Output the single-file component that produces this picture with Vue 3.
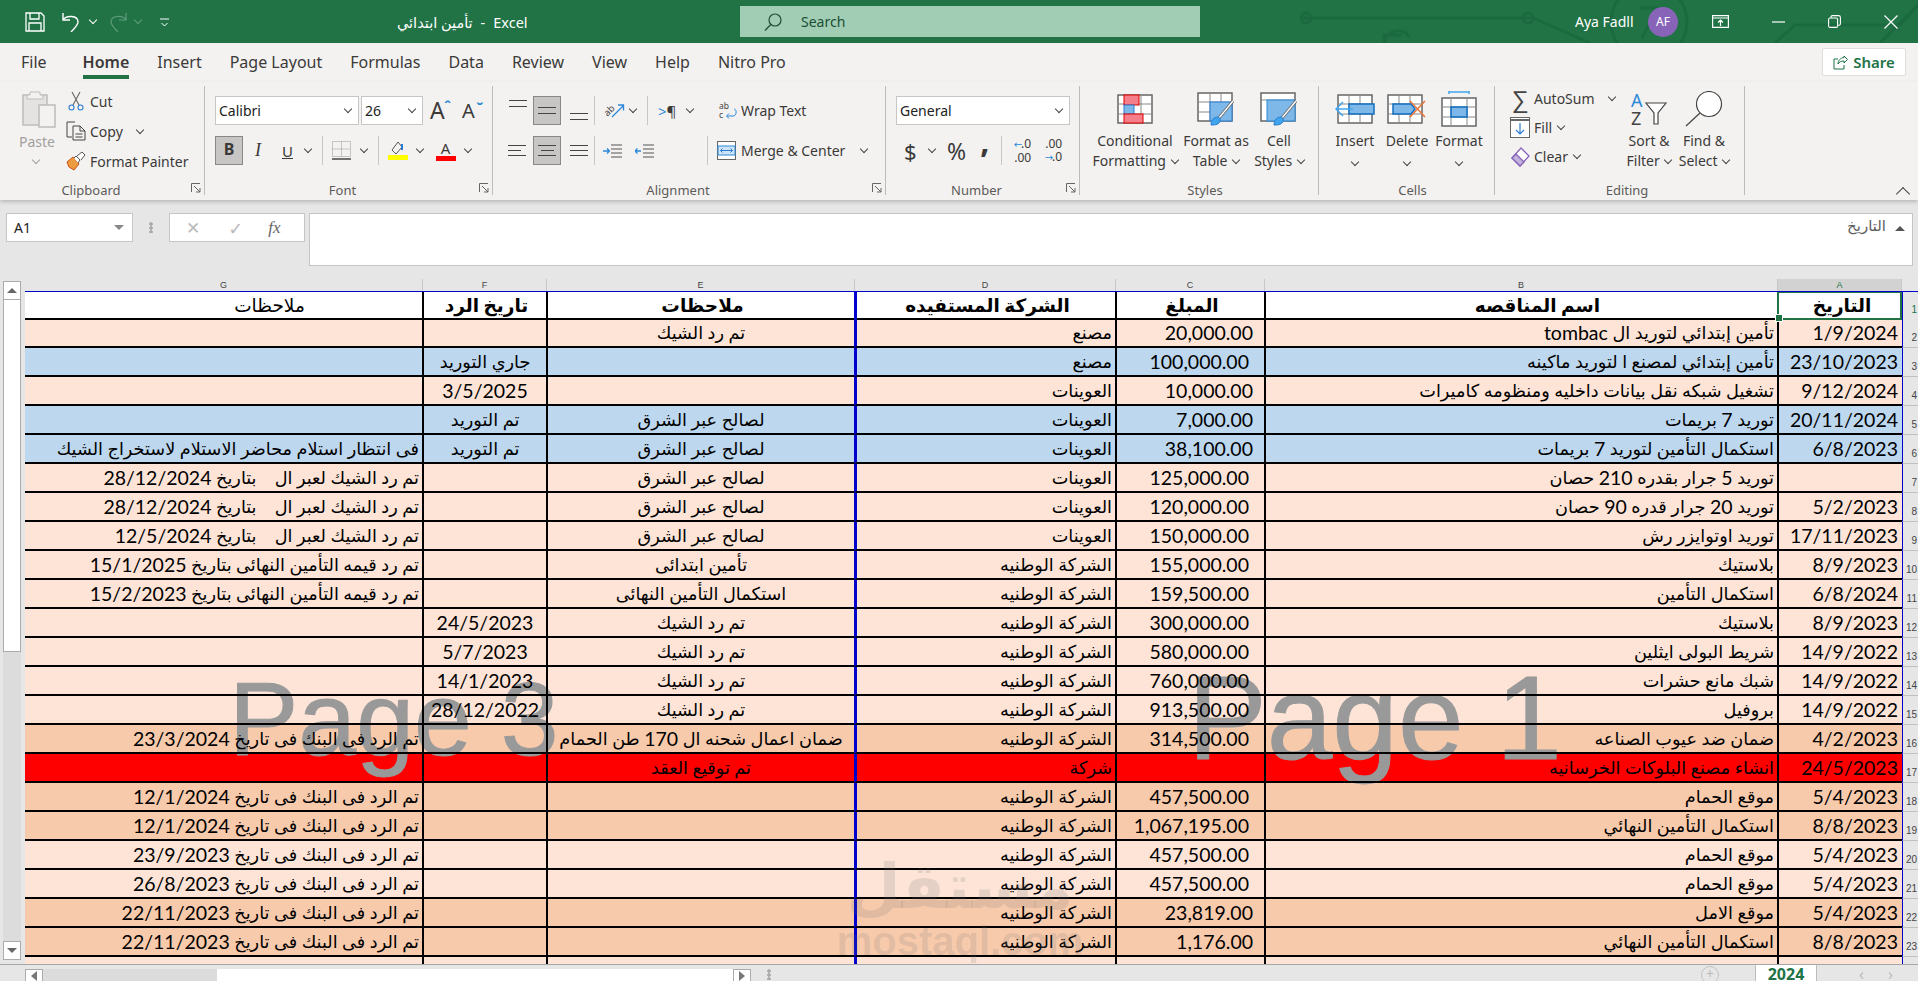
<template>
  <div class="excel">
    <!-- title bar -->
    <header class="titlebar">
      <svg class="circuit" viewBox="0 0 1918 43" width="1918" height="43" fill="none" stroke="#1b6a3f" stroke-width="3">
        <path d="M1300 18H1533L1590 43M1385 43c0-14 20-16 24-6M1384 43v-8h18" />
        <circle cx="1306" cy="18" r="5" />
        <circle cx="1528" cy="18" r="5" />
        <circle cx="1649" cy="22" r="38" />
        <path d="M1640 8h18l-16 30M1775 43l20-18h105l18-20M1880 43l38-38" />
      </svg>
      <div class="qat">
        <svg class="ic save" viewBox="0 0 20 20" width="20" height="20" fill="none" stroke="#fff" stroke-width="1.3"><path d="M1 1h15l3 3v15H1zM5 1v6h9V1M4 19v-8h12v8" /></svg>
        <svg class="ic undo" viewBox="0 0 20 20" width="20" height="20" fill="none" stroke="#fff" stroke-width="1.4"><path d="M2 1v7h7M2 8c3-5 15-5 15 2c0 3-3 6-7 10" /></svg>
        <i class="chev chev-white undo-chev"></i>
        <svg class="ic redo" viewBox="0 0 20 20" width="20" height="20" fill="none" stroke="#5f9c7b" stroke-width="1.2"><path d="M18 1v7h-7M18 8c-3-5-15-5-15 2c0 3 3 6 7 10" /></svg>
        <i class="chev chev-dim redo-chev"></i>
        <svg class="ic qat-more" viewBox="0 0 9 10" width="9" height="10" fill="none" stroke="#fff" stroke-width="1"><path d="M0 1h9M1.5 5l3 3 3-3" /></svg>
      </div>
      <div class="doc-title">
        <span dir="rtl">تأمين ابتدائي</span>
        <span class="dash">-</span>
        <span>Excel</span>
      </div>
      <div class="searchbox">
        <svg viewBox="0 0 18 18" width="18" height="18" fill="none" stroke="#1d4d35" stroke-width="1.2"><circle cx="11" cy="7" r="6" /><path d="M6.8 11.5L1 17.5" /></svg>
        <span>Search</span>
      </div>
      <div class="user">Aya Fadll</div>
      <div class="avatar">AF</div>
      <div class="winbtns">
        <svg viewBox="0 0 17 13" width="17" height="13" fill="none" stroke="#fff" stroke-width="1.2"><path d="M.6.6h15.8v11.8H.6zM.6 3h15.8M8.5 11V5M6 7.5l2.5-2.5L11 7.5" /></svg>
        <svg viewBox="0 0 13 2" width="13" height="2" class="w-min"><path d="M0 1h13" stroke="#fff" stroke-width="1.2" /></svg>
        <svg viewBox="0 0 13 13" width="13" height="13" class="w-max" fill="none" stroke="#fff" stroke-width="1.1"><rect x=".6" y="3" width="9" height="9.4" rx="1.5" /><path d="M3 3V2c0-1 .6-1.4 1.4-1.4h6C11.6.6 12.4 1.4 12.4 2.400v6.400c0 1-.6 1.400-1.400 1.400h-1.400" /></svg>
        <svg viewBox="0 0 14 14" width="14" height="14" class="w-close" fill="none" stroke="#fff" stroke-width="1.2"><path d="M.5.5l13 13M13.500.5l-13 13" /></svg>
      </div>
    </header>

    <!-- menu tabs -->
    <nav class="tabs">
      <span v-for="t in tabs" :key="t" class="tab" :class="{ active: t === 'Home', file: t === 'File' }">{{ t }}</span>
      <button class="share">
        <svg viewBox="0 0 15 15" width="15" height="15" fill="none" stroke="#217346" stroke-width="1"><path d="M11 1l3.500 3.500L11 8V6c-3 0-5 1-6 3 0-3 2-6 6-6.500zM5 4H1v10h10v-4" /></svg>
        Share
      </button>
    </nav>

    <!-- ribbon -->
    <section class="ribbon">
      <div class="group g-clip launcher">
        <div class="body">
          <div class="paste">
            <svg viewBox="0 0 34 38" width="34" height="38">
              <rect x="1" y="5" width="24" height="30" fill="#e4e3e2" stroke="#bdbcbb" stroke-width="1.5" />
              <path d="M8 5V2h10v3h3v4H5V5z" fill="#f3f2f1" stroke="#bdbcbb" />
              <rect x="17" y="15" width="16" height="22" fill="#f3f2f1" stroke="#bdbcbb" stroke-width="1.500" />
            </svg>
            <span class="pl">Paste</span>
            <i class="chev chev-dis"></i>
          </div>
          <div class="clip-rows">
            <div class="srow">
              <svg viewBox="0 0 16 20" width="16" height="20" fill="none" stroke-width="1.100"><path d="M4 1l7 13M12 1L5 14" stroke="#666" /><circle cx="3.500" cy="16.500" r="2.500" stroke="#2b7cd3" /><circle cx="12.500" cy="16.500" r="2.500" stroke="#2b7cd3" /></svg>
              <span>Cut</span>
            </div>
            <div class="srow">
              <svg viewBox="0 0 20 20" width="20" height="20" fill="none" stroke="#444" stroke-width="1"><path d="M8 1H1v15h5M8 1l1 0M7 5h7l5 5v9H7zM14 5v5h5M9.500 13h7M9.500 16h7" /></svg>
              <span>Copy</span>
              <i class="chev copy-chev"></i>
            </div>
            <div class="srow">
              <svg viewBox="0 0 20 20" width="20" height="20"><path d="M1 11l6-5 6 7-5 6-5-3z" fill="#ed9b40" stroke="#ca5010" /><path d="M8 7l2-2 4 4-2 3M11 5l5-4 3 3-4 5" fill="#fff" stroke="#555" /></svg>
              <span>Format Painter</span>
            </div>
          </div>
        </div>
        <div class="glabel">Clipboard</div>
        <svg class="launch" viewBox="0 0 10 10" width="10" height="10" fill="none" stroke="#666"><path d="M.5 9V.5H9M3 3l6 6M9 5v4H5" /></svg>
      </div>

      <div class="group g-font launcher">
        <div class="body col">
          <div class="line">
            <div class="select s-font"><span>Calibri</span><i class="chev"></i></div>
            <div class="select s-size"><span>26</span><i class="chev"></i></div>
            <span class="grow">A<sup>ˆ</sup></span>
            <span class="shrink">A<sup>ˇ</sup></span>
          </div>
          <div class="line second">
            <span class="bbtn on">B</span>
            <span class="ibtn">I</span>
            <span class="ubtn">U</span>
            <i class="chev u-chev"></i>
            <span class="vsep s1"></span>
            <svg class="bord" viewBox="0 0 19 19" width="19" height="19" fill="none"><path d="M.5.5h18v15H.5zM9.500.5v15M.5 8h18" stroke="#999" stroke-dasharray="1 1" /><path d="M0 18h19" stroke="#444" stroke-width="1.500" /></svg>
            <i class="chev b-chev"></i>
            <span class="vsep s2"></span>
            <div class="colorbtn c1">
              <svg viewBox="0 0 19 14" width="19" height="14" fill="none"><path d="M4 9l6-8 4 5-6 7z" stroke="#555" /><path d="M14 3v6" stroke="#2b7cd3" stroke-width="2" /></svg>
              <span class="swatch yellow"></span>
            </div>
            <i class="chev c-chev"></i>
            <div class="colorbtn c2">
              <span class="atext">A</span>
              <span class="swatch redswatch"></span>
            </div>
            <i class="chev d-chev"></i>
          </div>
        </div>
        <div class="glabel">Font</div>
        <svg class="launch" viewBox="0 0 10 10" width="10" height="10" fill="none" stroke="#666"><path d="M.5 9V.5H9M3 3l6 6M9 5v4H5" /></svg>
      </div>

      <div class="group g-align launcher">
        <div class="body">
          <div class="align-grid">
            <div class="aline">
              <span class="al tops"><b></b><b></b></span>
              <span class="al mid on"><b></b><b></b></span>
              <span class="al bots"><b></b><b></b></span>
              <span class="vsep a1"></span>
              <svg class="orient" viewBox="0 0 22 20" width="22" height="20" fill="none"><path d="M9 16L20 5M15 4h5.500v5.500" stroke="#2b88d8" stroke-width="1.300" /><text x="1" y="13" font-size="9.500" fill="#444" transform="rotate(-45 6 10)" font-family="Noto Sans">ab</text></svg>
              <i class="chev o-chev"></i>
              <span class="vsep a2"></span>
              <span class="rtl-mark"><em>&gt;</em>¶</span>
              <i class="chev r-chev"></i>
            </div>
            <div class="aline second">
              <span class="al l"><b></b><b></b><b></b></span>
              <span class="al c on"><b></b><b></b><b></b></span>
              <span class="al r"><b></b><b></b><b></b></span>
              <span class="vsep a1"></span>
              <svg class="indent" viewBox="0 0 19 14" width="19" height="14" fill="none" stroke="#555"><path d="M8 1h11M8 5h11M8 9h11M8 13h11" /><path d="M0 7h6M4 4.500L6.500 7 4 9.500" stroke="#2b88d8" stroke-width="1.300" /></svg>
              <svg class="outdent" viewBox="0 0 19 14" width="19" height="14" fill="none" stroke="#555"><path d="M8 1h11M8 5h11M8 9h11M8 13h11" /><path d="M6 7H0M2.500 4.500L0 7l2.500 2.500" stroke="#2b88d8" stroke-width="1.300" /></svg>
              <span class="vsep a3"></span>
            </div>
          </div>
          <div class="wrapcol">
            <div class="srow wrap">
              <svg viewBox="0 0 18 18" width="18" height="18" fill="none"><text x="0" y="7" font-size="8.500" fill="#444" font-family="Noto Sans">ab</text><text x="0" y="16" font-size="8.500" fill="#444" font-family="Noto Sans">c</text><path d="M15 7c3 0 3 7-1 7H8M10 11.500L7.500 14l2.500 2.500" stroke="#2b88d8" /></svg>
              <span>Wrap Text</span>
            </div>
            <div class="srow merge">
              <svg viewBox="0 0 19 19" width="19" height="19" fill="none"><rect x=".5" y=".5" width="18" height="18" fill="#fff" stroke="#666" /><rect x="1" y="5" width="17" height="9" fill="#cfe4f6" stroke="#2b88d8" /><path d="M3.500 9.500h12M5.500 7.500l-2 2 2 2M13.500 7.500l2 2-2 2" stroke="#2b7cd3" /></svg>
              <span>Merge &amp; Center</span>
              <i class="chev m-chev"></i>
            </div>
          </div>
        </div>
        <div class="glabel">Alignment</div>
        <svg class="launch" viewBox="0 0 10 10" width="10" height="10" fill="none" stroke="#666"><path d="M.5 9V.5H9M3 3l6 6M9 5v4H5" /></svg>
      </div>

      <div class="group g-num launcher">
        <div class="body col">
          <div class="select s-num"><span>General</span><i class="chev"></i></div>
          <div class="line second numline">
            <span class="dollar">$</span>
            <i class="chev n1"></i>
            <span class="pct">%</span>
            <span class="comma">,</span>
            <span class="vsep n2"></span>
            <span class="dec inc"><em>←</em>.0<br />.00</span>
            <span class="dec out">.00<br /><em>→</em>.0</span>
          </div>
        </div>
        <div class="glabel">Number</div>
        <svg class="launch" viewBox="0 0 10 10" width="10" height="10" fill="none" stroke="#666"><path d="M.5 9V.5H9M3 3l6 6M9 5v4H5" /></svg>
      </div>

      <div class="group g-styles">
        <div class="body">
          <div class="big w86">
            <div class="bigicon">
              <svg viewBox="0 0 36 30" width="36" height="30">
                <rect x="1" y="1" width="34" height="28" fill="#fff" stroke="#666" stroke-width="1.500" />
                <path d="M13 1v28M24 1v28M1 10h34M1 20h34" stroke="#888" />
                <rect x="7" y="1" width="15" height="10" fill="#f47e89" stroke="#d00" />
                <rect x="7" y="11" width="10" height="9" fill="#7db8e8" stroke="#2b7cd3" />
                <rect x="7" y="20" width="19" height="9" fill="#f47e89" stroke="#d00" />
              </svg>
            </div>
            <span>Conditional</span>
            <span>Formatting <i class="chev inl"></i></span>
          </div>
          <div class="big w76">
            <div class="bigicon">
              <svg viewBox="0 0 38 34" width="38" height="34">
                <rect x="1" y="1" width="34" height="28" fill="#fff" stroke="#666" stroke-width="1.500" />
                <path d="M13 1v28M24 1v28M1 10h34M1 20h34" stroke="#888" />
                <rect x="13" y="10" width="22" height="19" fill="#7db8e8" stroke="#2b7cd3" />
                <path d="M36 9L22 26" stroke="#666" stroke-width="3" />
                <path d="M36 9L22 26" stroke="#fff" stroke-width="1.400" />
                <path d="M14 33c0-5 3-8 7-8 3 1 3 4 1 6-2 2-5 2-8 2z" fill="#41a5ee" stroke="#2b7cd3" />
              </svg>
            </div>
            <span>Format as</span>
            <span>Table <i class="chev inl"></i></span>
          </div>
          <div class="big w50">
            <div class="bigicon">
              <svg viewBox="0 0 38 34" width="38" height="34">
                <rect x="1" y="1" width="34" height="28" fill="#fff" stroke="#666" stroke-width="1.500" />
                <path d="M1 8h34" stroke="#888" />
                <rect x="7" y="8" width="28" height="21" fill="#7db8e8" stroke="#2b88d8" />
                <path d="M36 9L22 26" stroke="#666" stroke-width="3" />
                <path d="M36 9L22 26" stroke="#fff" stroke-width="1.400" />
                <path d="M14 33c0-5 3-8 7-8 3 1 3 4 1 6-2 2-5 2-8 2z" fill="#41a5ee" stroke="#2b7cd3" />
              </svg>
            </div>
            <span>Cell</span>
            <span>Styles <i class="chev inl"></i></span>
          </div>
        </div>
        <div class="glabel">Styles</div>
      </div>

      <div class="group g-cells">
        <div class="body">
          <div class="big w48">
            <div class="bigicon">
              <svg viewBox="0 0 40 30" width="40" height="30">
                <rect x="3" y="1" width="34" height="28" fill="#fff" stroke="#666" stroke-width="1.500" />
                <path d="M14 1v28M25 1v28M3 10h34M3 20h34" stroke="#888" />
                <rect x="14" y="10" width="25" height="10" fill="#7db8e8" stroke="#106ebe" stroke-width="1.500" />
                <path d="M18 15H2M8 8l-7 7 7 7" fill="none" stroke="#41a5ee" stroke-width="1.500" />
              </svg>
            </div>
            <span>Insert</span>
            <i class="chev under"></i>
          </div>
          <div class="big w56">
            <div class="bigicon">
              <svg viewBox="0 0 40 30" width="40" height="30">
                <rect x="1" y="1" width="34" height="28" fill="#fff" stroke="#666" stroke-width="1.500" />
                <path d="M12 1v28M23 1v28M1 10h34M1 20h34" stroke="#888" />
                <path d="M6 10h18l4 5-4 5H6z" fill="#7db8e8" stroke="#106ebe" stroke-width="1.500" />
                <path d="M23 7l15 16M38 7L23 23" stroke="#e8743b" stroke-width="1.500" />
              </svg>
            </div>
            <span>Delete</span>
            <i class="chev under"></i>
          </div>
          <div class="big w48">
            <div class="bigicon">
              <svg viewBox="0 0 36 36" width="36" height="36">
                <path d="M8 1h20M8 0v3M28 0v3" stroke="#41a5ee" stroke-width="1.500" />
                <rect x="1" y="7" width="34" height="28" fill="#fff" stroke="#666" stroke-width="1.500" />
                <path d="M10 7v28M26 7v28M1 16h34M1 26h34" stroke="#888" />
                <rect x="10" y="16" width="16" height="10" fill="#7db8e8" stroke="#106ebe" stroke-width="1.500" />
              </svg>
            </div>
            <span>Format</span>
            <i class="chev under"></i>
          </div>
        </div>
        <div class="glabel">Cells</div>
      </div>

      <div class="group g-edit">
        <div class="body">
          <div class="edit-rows">
            <div class="srow">
              <span class="sigma">∑</span>
              <span>AutoSum</span>
              <i class="chev e1"></i>
            </div>
            <div class="srow">
              <svg viewBox="0 0 20 22" width="20" height="22" fill="none"><rect x=".5" y=".5" width="19" height="20" fill="#fff" stroke="#666" /><path d="M.5 3h19" stroke="#666" stroke-width="2" /><path d="M10 6v11M6 13l4 4 4-4" stroke="#2b7cd3" stroke-width="1.200" /></svg>
              <span>Fill</span>
              <i class="chev e2"></i>
            </div>
            <div class="srow">
              <svg viewBox="0 0 20 20" width="20" height="20"><path d="M11 1l8 8-9 10-8-8z" fill="#fff" stroke="#8764b8" stroke-width="1.300" /><path d="M6 7l8 8-4 4-8-8z" fill="#c3b2dd" stroke="#8764b8" stroke-width="1.300" /></svg>
              <span>Clear</span>
              <i class="chev e2"></i>
            </div>
          </div>
          <div class="big w54">
            <div class="bigicon sort">
              <svg viewBox="0 0 36 34" width="36" height="34" fill="none">
                <text x="0" y="15" font-size="18" fill="#2b88d8" font-family="Noto Sans">A</text>
                <text x="0" y="33" font-size="18" fill="#444" font-family="Noto Sans">Z</text>
                <path d="M15 11h20l-8 10v11h-4V21z" fill="#fff" stroke="#444" stroke-width="1.200" />
              </svg>
            </div>
            <span>Sort &amp;</span>
            <span>Filter <i class="chev inl"></i></span>
          </div>
          <div class="big w56">
            <div class="bigicon sort">
              <svg viewBox="0 0 38 36" width="38" height="36" fill="none" stroke="#444" stroke-width="1.200">
                <circle cx="24" cy="13" r="12.500" fill="#fff" />
                <path d="M15 22L1 35" />
              </svg>
            </div>
            <span>Find &amp;</span>
            <span>Select <i class="chev inl"></i></span>
          </div>
        </div>
        <div class="glabel">Editing</div>
      </div>
      <div class="ribbon-end"><i class="chev chev-up"></i></div>
    </section>

    <!-- formula bar -->
    <section class="formula">
      <div class="namebox"><span>A1</span><i class="tri"></i></div>
      <div class="dots"></div>
      <div class="fxbtns">
        <span class="fx-x">✕</span>
        <span class="fx-ok">✓</span>
        <span class="fx-f">fx</span>
      </div>
      <div class="finput">
        <i class="tri up-tri"></i>
        <span dir="rtl">التاريخ</span>
      </div>
    </section>

    <!-- sheet -->
    <section class="sheetwrap">
      <div class="vscroll">
        <div class="sbtn"><i class="tri up-tri dark"></i></div>
        <div class="vthumb"></div>
        <div class="vtrack"></div>
        <div class="sbtn"><i class="tri dark"></i></div>
      </div>
      <div class="sheet">
        <div class="colheads">
          <span v-for="c in columns" :key="c.key" class="chead" :class="{ sel: c.key === 'a' }">{{ c.key.toUpperCase() }}</span>
          <span class="corner"></span>
        </div>
        <div class="grid">
          <div class="wm wm3">Page 3</div>
          <div class="wm wm1">Page 1</div>
          <div class="mark">
            <span class="mark-ar" dir="rtl">مستقل</span>
            <span class="mark-en">mostaql.com</span>
          </div>
          <div v-for="(row, i) in rows" :key="i" class="row" :class="['tone-' + row.tone, { head: i === 0 }]">
            <div
              v-for="c in columns"
              :key="c.key"
              class="cell"
              :class="['c-' + c.key, { wide: c.key === 'c' && (row.c || '').length > 9 }]"
              dir="rtl"
            >
              <span v-for="(r, j) in runs(row[c.key])" :key="j" :class="{ latin: r.latin }">{{ r.t }}</span>
            </div>
            <div class="rownum" :class="{ cur: i === 0 }">{{ i + 1 }}</div>
          </div>
          <div class="selbox"><i class="handle"></i></div>
        </div>
      </div>
    </section>

    <!-- bottom bar -->
    <footer class="bottom">
      <div class="hscroll">
        <span class="hbtn"><i class="tri left"></i></span>
        <span class="htrack"></span>
        <span class="hthumb"></span>
        <span class="hbtn"><i class="tri right"></i></span>
      </div>
      <div class="dots small"></div>
      <div class="spacer"></div>
      <span class="addsheet">+</span>
      <span class="sheettab">2024</span>
      <span class="navarrow">‹</span>
      <span class="navarrow">›</span>
    </footer>
  </div>
</template>

<script setup>
const tabs = ['File', 'Home', 'Insert', 'Page Layout', 'Formulas', 'Data', 'Review', 'View', 'Help', 'Nitro Pro']

// same order as the sheet, right to left
const columns = [
  { key: 'g' }, { key: 'f' }, { key: 'e' }, { key: 'd' }, { key: 'c' }, { key: 'b' }, { key: 'a' }
]

const NAT = 'الشركة الوطنيه'
const AWN = 'العوينات'
const EBR = 'لصالح عبر الشرق'
const RET = 'تم رد الشيك'
const BANK = 'تم الرد فى البنك فى تاريخ '
const BACK = 'تم رد الشيك لعبر ال    بتاريخ '

const rows = [
  { tone: 'white', a: 'التاريخ', b: 'اسم المناقصه', c: 'المبلغ', d: 'الشركة المستفيده', e: 'ملاحظات', f: 'تاريخ الرد', g: 'ملاحظات' },
  { tone: 'peach', a: '1/9/2024', b: 'تأمين إبتدائي لتوريد ال tombac', c: '20,000.00', d: 'مصنع', e: RET },
  { tone: 'blue', a: '23/10/2023', b: 'تأمين إبتدائي لمصنع ا لتوريد ماكينه', c: '100,000.00', d: 'مصنع', f: 'جاري التوريد' },
  { tone: 'peach', a: '9/12/2024', b: 'تشغيل شبكه نقل بيانات داخليه ومنظومه كاميرات', c: '10,000.00', d: AWN, f: '3/5/2025' },
  { tone: 'blue', a: '20/11/2024', b: 'توريد 7 بريمات', c: '7,000.00', d: AWN, e: EBR, f: 'تم التوريد' },
  { tone: 'blue', a: '6/8/2023', b: 'استكمال التأمين لتوريد 7 بريمات', c: '38,100.00', d: AWN, e: EBR, f: 'تم التوريد', g: 'فى انتظار استلام محاضر الاستلام لاستخراج الشيك' },
  { tone: 'peach', b: 'توريد 5 جرار بقدره 210 حصان', c: '125,000.00', d: AWN, e: EBR, g: BACK + '28/12/2024' },
  { tone: 'peach', a: '5/2/2023', b: 'توريد 20 جرار قدره 90 حصان', c: '120,000.00', d: AWN, e: EBR, g: BACK + '28/12/2024' },
  { tone: 'peach', a: '17/11/2023', b: 'توريد اوتوايزر رش', c: '150,000.00', d: AWN, e: EBR, g: BACK + '12/5/2024' },
  { tone: 'peach', a: '8/9/2023', b: 'بلاستيك', c: '155,000.00', d: NAT, e: 'تأمين ابتدائى', g: 'تم رد قيمه التأمين النهائى بتاريخ 15/1/2025' },
  { tone: 'peach', a: '6/8/2024', b: 'استكمال التأمين', c: '159,500.00', d: NAT, e: 'استكمال التأمين النهائى', g: 'تم رد قيمه التأمين النهائى بتاريخ 15/2/2023' },
  { tone: 'peach', a: '8/9/2023', b: 'بلاستيك', c: '300,000.00', d: NAT, e: RET, f: '24/5/2023' },
  { tone: 'peach', a: '14/9/2022', b: 'شريط البولى ايثلين', c: '580,000.00', d: NAT, e: RET, f: '5/7/2023' },
  { tone: 'peach', a: '14/9/2022', b: 'شبك مانع حشرات', c: '760,000.00', d: NAT, e: RET, f: '14/1/2023' },
  { tone: 'peach', a: '14/9/2022', b: 'بروفيل', c: '913,500.00', d: NAT, e: RET, f: '28/12/2022' },
  { tone: 'tan', a: '4/2/2023', b: 'ضمان ضد عيوب الصناعه', c: '314,500.00', d: NAT, e: 'ضمان اعمال شحنه ال 170 طن الحمام', g: BANK + '23/3/2024' },
  { tone: 'red', a: '24/5/2023', b: 'انشاء مصنع البلوكات الخرسانيه', d: 'شركة', e: 'تم توقيع العقد' },
  { tone: 'tan', a: '5/4/2023', b: 'موقع الحمام  ', c: '457,500.00', d: NAT, g: BANK + '12/1/2024' },
  { tone: 'tan', a: '8/8/2023', b: 'استكمال التأمين النهائي', c: '1,067,195.00', d: NAT, g: BANK + '12/1/2024' },
  { tone: 'peach', a: '5/4/2023', b: 'موقع الحمام  ', c: '457,500.00', d: NAT, g: BANK + '23/9/2023' },
  { tone: 'peach', a: '5/4/2023', b: 'موقع الحمام  ', c: '457,500.00', d: NAT, g: BANK + '26/8/2023' },
  { tone: 'tan', a: '5/4/2023', b: 'موقع الامل', c: '23,819.00', d: NAT, g: BANK + '22/11/2023' },
  { tone: 'tan', a: '8/8/2023', b: 'استكمال التأمين النهائي', c: '1,176.00', d: NAT, g: BANK + '22/11/2023' },
  { tone: 'peach' }
]

// digits and latin words get a bigger size than the arabic fallback font
const runs = (text) => {
  if (!text) return []
  return text.split(/([0-9A-Za-z/,.]+)/).filter(Boolean).map((t) => ({
    t,
    latin: /^[0-9A-Za-z/,.]+$/.test(t)
  }))
}
</script>

<style scoped>
.excel {
  width: 1918px;
  height: 981px;
  display: flex;
  flex-direction: column;
  overflow: hidden;
  background: #e6e6e6;
  font-family: "Noto Sans", "DejaVu Sans", sans-serif;
  font-size: 14px;
  color: #3b3a39;
}

/* chevrons and little triangles */
.chev {
  display: inline-block;
  width: 5px;
  height: 5px;
  border-right: 1px solid #444;
  border-bottom: 1px solid #444;
  transform: rotate(45deg);
  flex: none;
}
.chev-white { border-color: #fff; }
.chev-dim { border-color: #5f9c7b; }
.chev-dis { border-color: #a19f9d; }
.chev-up { transform: rotate(225deg); width: 9px; height: 9px; }
.chev.inl { margin: 0 0 3px 2px; }
.chev.under { margin-top: 8px; }
.tri {
  display: inline-block;
  width: 0;
  height: 0;
  border-left: 5px solid transparent;
  border-right: 5px solid transparent;
  border-top: 5px solid #888;
}
.tri.up-tri { border-top: 0; border-bottom: 5px solid #555; }
.tri.dark { border-top-color: #666; }
.tri.up-tri.dark { border-bottom-color: #666; }
.tri.left { border: 5px solid transparent; border-right: 6px solid #777; border-left: 0; }
.tri.right { border: 5px solid transparent; border-left: 6px solid #777; border-right: 0; }

/* title bar */
.titlebar {
  position: relative;
  flex: none;
  height: 43px;
  background: #217346;
  color: #fff;
  display: flex;
  align-items: center;
  overflow: hidden;
}
.circuit { position: absolute; left: 0; top: 0; }
.qat { position: relative; display: flex; align-items: center; width: 397px; flex: none; padding-left: 25px; box-sizing: border-box; }
.undo { margin-left: 16px; }
.undo-chev { margin: -3px 0 0 9px; }
.redo { margin-left: 12px; }
.redo-chev { margin: -3px 0 0 7px; }
.qat-more { margin-left: 19px; margin-top: 2px; }
.doc-title { position: relative; width: 343px; flex: none; display: flex; gap: 8px; font-size: 14.500px; }
.searchbox {
  position: relative;
  width: 460px;
  height: 31px;
  flex: none;
  background: #a0cdb3;
  color: #1d4d35;
  display: flex;
  align-items: center;
  padding-left: 24px;
  box-sizing: border-box;
  gap: 19px;
}
.user { position: relative; margin-left: 375px; width: 73px; flex: none; font-size: 14px; }
.avatar {
  position: relative;
  width: 30px;
  height: 30px;
  border-radius: 50%;
  background: #8764b8;
  font-size: 12px;
  display: flex;
  align-items: center;
  justify-content: center;
  flex: none;
}
.winbtns { position: relative; display: flex; align-items: center; margin-left: 34px; }
.w-min { margin-left: 43px; }
.w-max { margin-left: 43px; }
.w-close { margin-left: 43px; }

/* menu tabs */
.tabs {
  flex: none;
  height: 39px;
  background: #f3f2f1;
  display: flex;
  align-items: flex-start;
  gap: 28px;
  padding-left: 21px;
  position: relative;
}
.tab {
  height: 32px;
  line-height: 38px;
  font-size: 16px;
  box-sizing: content-box;
  white-space: nowrap;
}
.tab.file { margin-right: 8px; }
.tab.active { font-weight: 600; color: #3b3a39; border-bottom: 4px solid #217346; }
.share {
  margin-left: auto;
  margin-right: 12px;
  margin-top: 5px;
  width: 84px;
  height: 28px;
  background: #fff;
  border: 1px solid #e1dfdd;
  border-radius: 2px;
  color: #217346;
  font-family: inherit;
  font-size: 15px;
  font-weight: 600;
  display: flex;
  align-items: center;
  justify-content: center;
  gap: 5px;
  padding: 0;
}

/* ribbon */
.ribbon {
  flex: none;
  height: 118px;
  background: #f3f2f1;
  display: flex;
  padding-top: 4px;
  box-sizing: border-box;
  box-shadow: 0 2px 4px rgba(0, 0, 0, .2);
  position: relative;
  z-index: 2;
}
.group {
  position: relative;
  height: 109px;
  display: flex;
  flex-direction: column;
  border-right: 1px solid #bdbcbb;
  box-sizing: border-box;
  flex: none;
}
.body { flex: 1; display: flex; min-height: 0; }
.body.col { flex-direction: column; }
.glabel { height: 19px; line-height: 29px; text-align: center; font-size: 13px; color: #5d5b59; white-space: nowrap; }
.launcher .glabel { padding-right: 22px; }
.launch { position: absolute; right: 3px; bottom: 2px; }
.srow { display: flex; align-items: center; height: 30px; white-space: nowrap; }
.vsep { display: inline-block; width: 1px; background: #c8c6c4; flex: none; }
.on { background: #c8c6c4; outline: 1px solid #8a8886; outline-offset: -1px; }

.g-clip { width: 205px; }
.paste {
  margin-left: 19px;
  width: 47px;
  padding-top: 4px;
  box-sizing: border-box;
  display: flex;
  flex-direction: column;
  align-items: flex-start;
  color: #a19f9d;
  flex: none;
}
.paste svg { margin-left: 3px; }
.pl { margin-top: 4px; font-size: 14px; }
.paste .chev { margin-top: 6px; margin-left: 14px; }
.clip-rows .srow svg { width: 20px; margin-right: 4px; flex: none; }
.copy-chev { margin-left: 14px; margin-top: -3px; }

.g-font { width: 288px; padding: 10px 0 0 10px; }
.line { display: flex; align-items: center; height: 29px; }
.line.second { margin-top: 11px; }
.select {
  height: 29px;
  box-sizing: border-box;
  background: #fff;
  border: 1px solid #c8c6c4;
  display: flex;
  align-items: center;
  justify-content: space-between;
  padding: 0 7px 0 3px;
  flex: none;
  color: #222;
}
.select .chev { margin-top: -3px; }
.s-font { width: 144px; }
.s-size { width: 62px; margin-left: 2px; }
.grow, .shrink { font-size: 21px; line-height: 1; flex: none; position: relative; }
.grow { margin-left: 7px; width: 32px; font-size: 23px; }
.shrink { font-size: 20px; }
.grow sup, .shrink sup { color: #2b88d8; font-size: 15px; position: absolute; top: 0; left: 14px; font-weight: 700; }
.bbtn { width: 28px; height: 29px; font-weight: 700; font-size: 16px; text-align: center; line-height: 27px; flex: none; }
.ibtn { margin-left: 12px; width: 8px; font-family: "Liberation Serif", serif; font-style: italic; font-size: 18px; flex: none; }
.ubtn { margin-left: 19px; text-decoration: underline; font-size: 15px; width: 12px; flex: none; }
.u-chev { margin: -3px 0 0 11px; }
.second .vsep { height: 29px; }
.s1 { margin-left: 11px; }
.bord { margin-left: 9px; flex: none; }
.b-chev { margin: -3px 0 0 10px; }
.s2 { margin-left: 11px; }
.colorbtn { width: 19px; flex: none; display: flex; flex-direction: column; align-items: center; }
.c1 { margin-left: 9px; }
.c2 { margin-left: 13px; }
.c-chev { margin: -3px 0 0 10px; }
.d-chev { margin: -3px 0 0 10px; }
.swatch { width: 20px; height: 5px; display: block; flex: none; }
.yellow { background: #ffff00; }
.redswatch { background: #ff0000; }
.atext { font-size: 15px; line-height: 16px; height: 16px; }

.g-align { width: 393px; padding-top: 10px; display: flex; }
.align-grid { margin-left: 15px; width: 199px; flex: none; }
.aline { display: flex; align-items: center; height: 29px; position: relative; }
.aline.second { margin-top: 11px; }
.aline .vsep { height: 29px; }
.al {
  width: 19px;
  height: 29px;
  margin-right: 6px;
  display: flex;
  flex-direction: column;
  gap: 5px;
  box-sizing: border-box;
  flex: none;
  align-items: center;
}
.al b { display: block; height: 1px; width: 18px; background: #444; }
.al.on { width: 28px; margin-right: 8px; margin-left: 0; }
.al.tops { justify-content: flex-start; padding-top: 4px; }
.al.mid { justify-content: center; }
.al.bots { justify-content: flex-end; padding-bottom: 5px; }
.al.l, .al.c, .al.r { justify-content: center; gap: 4px; }
.al.l { align-items: flex-start; }
.al.r { align-items: flex-end; }
.al.l b:nth-child(2) { width: 13px; }
.al.c b:nth-child(2) { width: 13px; }
.orient { margin-left: 8px; flex: none; }
.o-chev { margin: -3px 0 0 5px; }
.a2 { margin-left: 11px; }
.rtl-mark { margin-left: 10px; font-size: 15px; width: 16px; flex: none; }
.rtl-mark em { color: #2b88d8; font-style: normal; }
.r-chev { margin: -3px 0 0 13px; }
.indent { margin-left: 8px; flex: none; }
.outdent { margin-left: 13px; flex: none; }
.a3 { margin-left: 53px; }
.wrapcol .srow { height: 29px; }
.wrapcol .srow svg { flex: none; }
.wrap svg { margin-left: 12px; margin-right: 4px; }
.merge { margin-top: 11px; }
.merge svg { margin-left: 10px; margin-right: 5px; }
.m-chev { margin: -3px 0 0 16px; }

.g-num { width: 194px; padding: 10px 0 0 10px; }
.s-num { width: 174px; }
.numline { margin-top: 11px; }
.dollar { font-size: 22px; margin-left: 8px; width: 12px; }
.n1 { margin: -3px 0 0 13px; }
.pct { margin-left: 12px; font-size: 23px; }
.comma { margin-left: 14px; font-size: 32px; font-weight: 700; line-height: 16px; height: 24px; margin-top: -12px; width: 10px; }
.n2 { margin-left: 11px; }
.dec { font-size: 12px; line-height: 13px; display: block; width: 22px; margin-left: 7px; text-align: right; flex: none; }
.dec em { color: #2b88d8; font-style: normal; font-size: 10px; margin-right: -1px; }
.out { margin-left: 9px; }

.big { display: flex; flex-direction: column; align-items: center; flex: none; line-height: 20px; white-space: nowrap; }
.bigicon { height: 45px; display: flex; align-items: center; justify-content: center; }
.w86 { width: 86px; }
.w76 { width: 76px; }
.w50 { width: 50px; }
.w48 { width: 48px; }
.w56 { width: 56px; }
.w54 { width: 54px; }
.g-styles { width: 239px; padding-left: 12px; }
.g-cells { width: 176px; padding-left: 12px; }
.g-edit { width: 250px; padding-left: 15px; }
.edit-rows { width: 112px; flex: none; margin-top: -2px; }
.edit-rows .srow { height: 29px; }
.edit-rows .srow svg, .sigma { width: 20px; margin-right: 4px; flex: none; }
.sigma { font-size: 24px; line-height: 1; text-align: center; color: #444; font-weight: 300; }
.e1 { margin: -3px 0 0 14px; }
.e2 { margin: -3px 0 0 6px; }
.ribbon-end { flex: 1; display: flex; justify-content: flex-end; align-items: flex-end; padding: 0 10px 1px 0; }

/* formula bar */
.formula {
  flex: none;
  height: 79px;
  display: flex;
  padding-top: 13px;
  box-sizing: border-box;
  background: #e6e6e6;
}
.namebox {
  width: 127px;
  height: 29px;
  margin-left: 6px;
  box-sizing: border-box;
  background: #fff;
  border: 1px solid #c8c6c4;
  display: flex;
  align-items: center;
  justify-content: space-between;
  padding: 0 8px 0 7px;
  color: #222;
  flex: none;
}
.dots {
  width: 4px;
  height: 11px;
  margin: 9px 16px 0 16px;
  background: radial-gradient(circle, #aaa 1.500px, transparent 2px) 0 0 / 4px 4px;
  flex: none;
}
.fxbtns {
  width: 136px;
  height: 29px;
  box-sizing: border-box;
  background: #fff;
  border: 1px solid #c8c6c4;
  display: flex;
  align-items: center;
  flex: none;
  position: relative;
}
.fx-x { color: #bbb; font-size: 17px; margin-left: 16px; }
.fx-ok { color: #bbb; font-size: 18px; margin-left: 28px; }
.fx-f { font-family: "Liberation Serif", serif; font-style: italic; color: #666; font-size: 17px; margin-left: 25px; }
.finput {
  width: 1604px;
  height: 53px;
  margin-left: 4px;
  box-sizing: border-box;
  background: #fff;
  border: 1px solid #c8c6c4;
  padding: 3px 7px 0 0;
  display: flex;
  flex-direction: row-reverse;
  align-items: flex-start;
  gap: 9px;
  color: #605e5c;
  flex: none;
  font-size: 15px;
  font-family: "DejaVu Sans", sans-serif;
}
.finput .up-tri { margin-top: 9px; }

/* sheet */
.sheetwrap { flex: none; height: 685px; display: flex; overflow: hidden; }
.vscroll { width: 25px; flex: none; box-sizing: border-box; padding: 2px 4px 4px 3px; display: flex; flex-direction: column; }
.sbtn { height: 19px; background: #fff; border: 1px solid #ababab; box-sizing: border-box; display: flex; align-items: center; justify-content: center; flex: none; }
.vthumb { height: 352px; background: #fff; border: 1px solid #ababab; border-top: 0; box-sizing: border-box; flex: none; }
.vtrack { flex: 1; background: #dcdcdc; }
.sheet { flex: 1; min-width: 0; }
.colheads {
  height: 12px;
  display: grid;
  grid-template-columns: 398px 124px 308px 261px 149px 513px 124px 16px;
}
.chead {
  font: 9px/12px "Liberation Sans", sans-serif;
  text-align: center;
  color: #444;
  border-right: 1px solid #c8c8c8;
  box-sizing: border-box;
}
.chead.sel { background: #d2d2d2; color: #217346; border-bottom: 1px solid #217346; }
.grid { position: relative; height: 673px; overflow: hidden; border-top: 1px solid #0000cc; box-sizing: border-box; }
.row {
  display: grid;
  grid-template-columns: 397px 124px 308px 261px 149px 513px 125px 16px;
  height: 29px;
}
.row.head { height: 27px; }
.tone-white { background: #fff; }
.tone-peach { background: #fde4d7; }
.tone-blue { background: #bdd7ee; }
.tone-tan { background: #f7caac; }
.tone-red { background: #ff0000; }

/* cell stays above the page-break letters, the fills stay under */
.cell {
  position: relative;
  z-index: 2;
  box-sizing: border-box;
  border-left: 2px solid #000;
  border-bottom: 2px solid #000;
  font-family: Lato, "DejaVu Sans", sans-serif;
  font-size: 17.700px;
  color: #000;
  display: flex;
  align-items: flex-end;
  justify-content: flex-start;
  padding: 0 3px 0;
  line-height: 26px;
  white-space: pre;
  overflow: visible;
}
.cell .latin { font-size: 19.500px; }
.row .cell:first-child { border-left: 0; }
.c-d { border-left: 3px solid #0000cc; }
.c-e, .c-f { justify-content: center; }
.c-c { padding-right: 11px; }
.c-c.wide { padding-right: 15px; }
.c-a { padding-right: 4px; }
.head .cell { justify-content: center; font-weight: 700; font-size: 18.500px; padding-right: 0; }
.head .c-b { padding-left: 32px; }
.head .c-g { font-weight: 400; padding-left: 92px; padding-right: 0; }
.rownum {
  background: #e6e6e6;
  border-bottom: 1px solid #c0c0c0;
  border-left: 1px solid #0000cc;
  box-sizing: border-box;
  font: 10px/1 "Liberation Sans", sans-serif;
  color: #444;
  display: flex;
  align-items: flex-end;
  justify-content: flex-end;
  padding: 0 1px 4px 0;
  position: relative;
  z-index: 2;
}
.rownum.cur { color: #217346; }
.corner { border-bottom: 1px solid #c0c0c0; }

.wm {
  position: absolute;
  z-index: 1;
  font: 104px/1 "Liberation Sans", sans-serif;
  color: #999;
  -webkit-text-stroke: 1px #999;
  white-space: nowrap;
}
.wm3 { left: 204px; top: 375px; }
.wm1 { left: 1163px; top: 367px; font-size: 118px; }
.mark {
  position: absolute;
  z-index: 3;
  left: 819px;
  top: 560px;
  width: 232px;
  display: flex;
  flex-direction: column;
  align-items: center;
  color: rgba(110, 110, 110, .17);
  pointer-events: none;
}
.mark-ar { font: 700 62px/70px "DejaVu Sans", sans-serif; }
.mark-en { font: 700 40px/38px "Liberation Sans", sans-serif; }
.selbox {
  position: absolute;
  z-index: 4;
  left: 1752px;
  top: -1px;
  width: 125px;
  height: 29px;
  border: 2px solid #217346;
  box-sizing: border-box;
}
.handle { position: absolute; left: -4px; bottom: -4px; width: 6px; height: 6px; background: #217346; border: 1px solid #fff; }

/* bottom bar */
.bottom {
  flex: none;
  height: 17px;
  background: #e6e6e6;
  border-top: 1px solid #a6a6a6;
  box-sizing: border-box;
  display: flex;
  align-items: flex-end;
  padding: 0 13px 0 25px;
  position: relative;
  z-index: 3;
}
.hscroll { display: flex; height: 12px; flex: none; }
.hbtn { width: 18px; height: 12px; background: #fff; border: 1px solid #ababab; border-bottom: 0; box-sizing: border-box; display: flex; align-items: center; justify-content: center; }
.htrack { width: 174px; background: #dcdcdc; }
.hthumb { width: 516px; background: #fff; }
.dots.small { margin: 0 0 1px 16px; }
.spacer { flex: 1; }
.addsheet {
  width: 16px;
  height: 16px;
  border: 1px solid #c4c4c4;
  border-radius: 50%;
  color: #bbb;
  margin-right: 36px;
  line-height: 14px;
  text-align: center;
  flex: none;
  margin-bottom: -3px;
  font-size: 14px;
}
.sheettab {
  width: 62px;
  height: 16px;
  margin-right: 30px;
  background: #fff;
  color: #217346;
  font-weight: 700;
  font-size: 16px;
  line-height: 19px;
  text-align: center;
  flex: none;
  overflow: hidden;
  border-left: 1px solid #bbb;
  border-right: 1px solid #bbb;
  box-sizing: border-box;
}
.navarrow { color: #bbb; width: 29px; text-align: center; line-height: 14px; font-size: 16px; flex: none; }
</style>

<style>
html, body {
  margin: 0;
  overflow: hidden;
  background: #e6e6e6;
}
</style>
